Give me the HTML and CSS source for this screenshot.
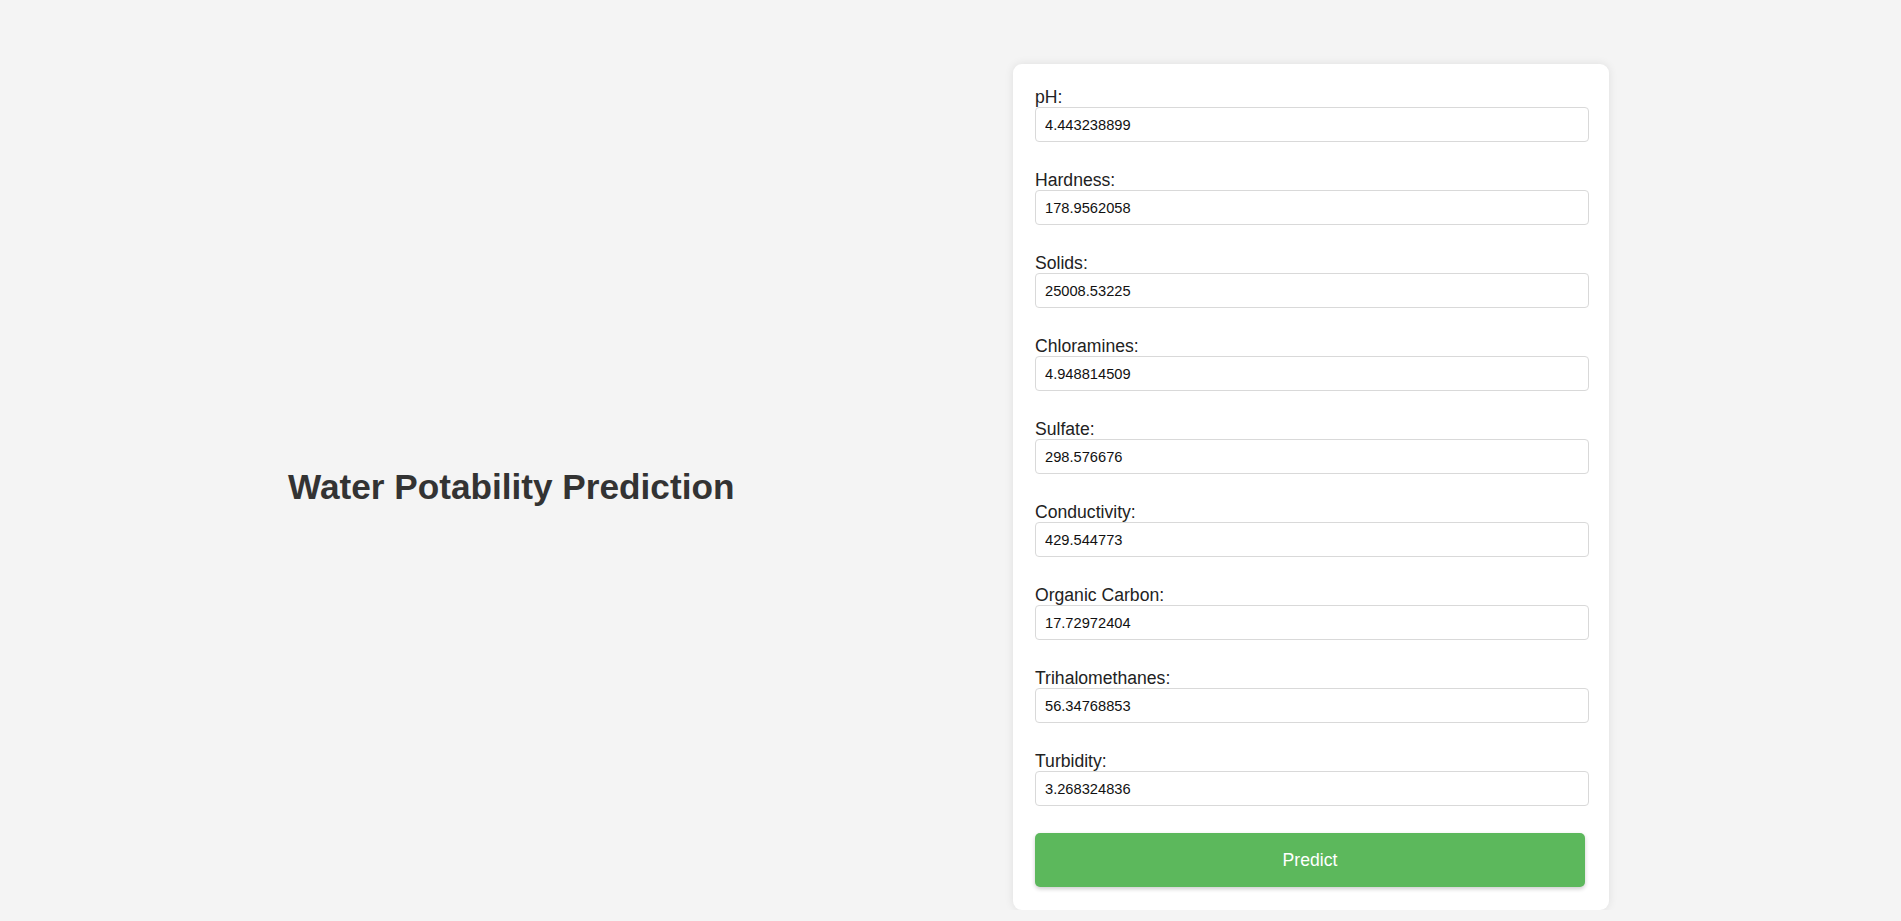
FILE: index.html
```html
<!DOCTYPE html>
<html lang="en">
<head>
<meta charset="utf-8">
<title>Water Potability Prediction</title>
<link rel="stylesheet" href="styles.css">
</head>
<body>
<div class="page">
  <h1 class="title">Water Potability Prediction</h1>
  <form class="card">
    <div class="field">
      <label class="label" for="ph">pH:</label>
      <input class="input" id="ph" type="text" value="4.443238899">
    </div>
    <div class="field">
      <label class="label" for="hardness">Hardness:</label>
      <input class="input" id="hardness" type="text" value="178.9562058">
    </div>
    <div class="field">
      <label class="label" for="solids">Solids:</label>
      <input class="input" id="solids" type="text" value="25008.53225">
    </div>
    <div class="field">
      <label class="label" for="chloramines">Chloramines:</label>
      <input class="input" id="chloramines" type="text" value="4.948814509">
    </div>
    <div class="field">
      <label class="label" for="sulfate">Sulfate:</label>
      <input class="input" id="sulfate" type="text" value="298.576676">
    </div>
    <div class="field">
      <label class="label" for="conductivity">Conductivity:</label>
      <input class="input" id="conductivity" type="text" value="429.544773">
    </div>
    <div class="field">
      <label class="label" for="organic">Organic Carbon:</label>
      <input class="input" id="organic" type="text" value="17.72972404">
    </div>
    <div class="field">
      <label class="label" for="trihalo">Trihalomethanes:</label>
      <input class="input" id="trihalo" type="text" value="56.34768853">
    </div>
    <div class="field field-last">
      <label class="label" for="turbidity">Turbidity:</label>
      <input class="input" id="turbidity" type="text" value="3.268324836">
    </div>
    <button class="btn" type="button">Predict</button>
  </form>
</div>
</body>
</html>
```
FILE: styles.css
```css
html, body {
  margin: 0;
  padding: 0;
  background: #f4f4f4;
  font-family: "Liberation Sans", Arial, sans-serif;
}

.page {
  display: flex;
  align-items: center;
  padding: 64px 292px 0 288px;
}

.title {
  margin: 0;
  font-size: 35.2px;
  font-weight: bold;
  color: #333;
  line-height: 40px;
  white-space: nowrap;
}

.card {
  margin-left: auto;
  width: 596px;
  box-sizing: border-box;
  padding: 23px 20px 23px 22px;
  background: #fff;
  border-radius: 9px;
  box-shadow: 0 0 10px rgba(0, 0, 0, 0.09);
}

.field {
  margin-bottom: 28px;
}

.field-last {
  margin-bottom: 27px;
}

.label {
  display: block;
  font-size: 17.6px;
  line-height: 20px;
  color: #222;
}

.input {
  display: block;
  width: 100%;
  height: 35px;
  box-sizing: border-box;
  padding: 0 9px;
  border: 1px solid #d9d9d9;
  border-radius: 4px;
  font-family: "Liberation Sans", Arial, sans-serif;
  font-size: 14.67px;
  color: #111;
  background: #fff;
  outline: none;
}

.btn {
  display: block;
  width: 550px;
  height: 54px;
  border: none;
  border-radius: 5px;
  background: #5cb85c;
  color: #fff;
  font-family: "Liberation Sans", Arial, sans-serif;
  font-size: 17.6px;
  box-shadow: 0 2px 4px rgba(0, 0, 0, 0.2);
  cursor: pointer;
}
```
